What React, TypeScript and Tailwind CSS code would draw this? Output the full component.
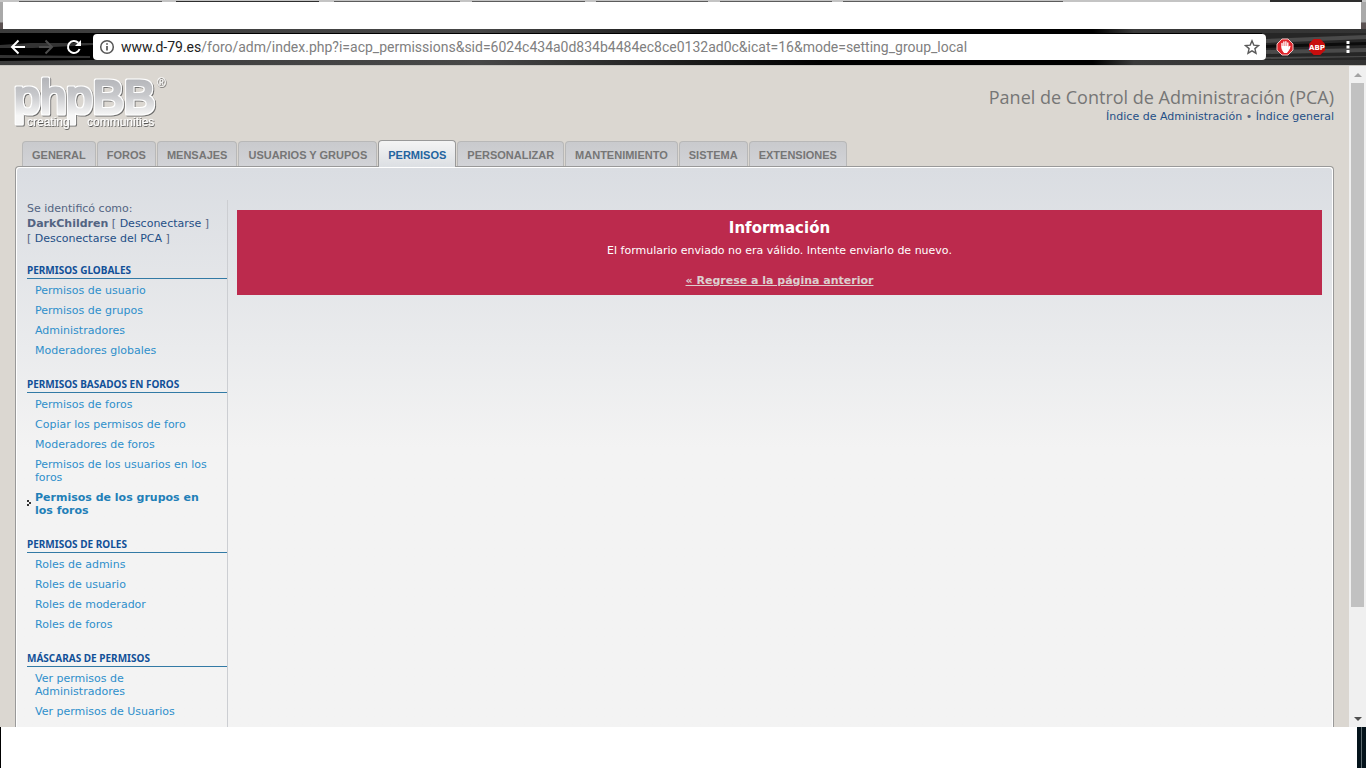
import { ReactNode } from "react";

const tabs = [
  "General",
  "Foros",
  "Mensajes",
  "Usuarios y grupos",
  "Permisos",
  "Personalizar",
  "Mantenimiento",
  "Sistema",
  "Extensiones",
];

const activeTab = "Permisos";
const activeItem = "Permisos de los grupos en los foros";

const menuBlocks = [
  {
    title: "Permisos globales",
    items: [
      "Permisos de usuario",
      "Permisos de grupos",
      "Administradores",
      "Moderadores globales",
    ],
  },
  {
    title: "Permisos basados en foros",
    items: [
      "Permisos de foros",
      "Copiar los permisos de foro",
      "Moderadores de foros",
      "Permisos de los usuarios en los foros",
      "Permisos de los grupos en los foros",
    ],
  },
  {
    title: "Permisos de roles",
    items: [
      "Roles de admins",
      "Roles de usuario",
      "Roles de moderador",
      "Roles de foros",
    ],
  },
  {
    title: "Máscaras de permisos",
    items: [
      "Ver permisos de Administradores",
      "Ver permisos de Usuarios",
      "Ver permisos de Moderadores globales",
    ],
  },
];

function ToolbarButton({ label, children }: { label: string; children: ReactNode }) {
  return (
    <button type="button" aria-label={label} className="flex h-7 w-7 items-center justify-center">
      {children}
    </button>
  );
}

function WindowTop() {
  return (
    <div className="flex h-[29px] shrink-0 flex-col bg-linear-to-b from-[#a9a9a9] from-75% to-[#5b5252] to-80%">
      <svg
        className="h-0.5 w-full"
        viewBox="0 0 1366 2"
        preserveAspectRatio="none"
        aria-hidden="true"
      >
        <path d="M0 0h1366v2H0z" fill="#c4c4c4" />
        <path
          d="M19 1h143v1H19zM176 1h143v1H176zM334 1h126v1H334zM472 1h113v1H472zM596 1h112v1H596zM720 1h112v1H720zM843 1h220v1H843z"
          fill="#5c5c5c"
        />
        <path d="M176 1h143v1H176zM1270 0h92v2h-92z" fill="#2e2e2e" />
      </svg>
      <div className="mr-[5px] ml-[3px] flex-1 bg-white" />
    </div>
  );
}

function BrowserBar() {
  return (
    <div className="relative flex h-9 shrink-0 items-center bg-black pl-1">
      <svg
        className="absolute inset-0 h-full w-full"
        viewBox="0 0 1366 36"
        preserveAspectRatio="none"
        aria-hidden="true"
      >
        <defs>
          <linearGradient id="bar-streak" x1="0" y1="0" x2="1" y2="0">
            <stop offset="0" stopColor="#3c3c3c" />
            <stop offset="0.350" stopColor="#474747" />
            <stop offset="0.600" stopColor="#000" />
            <stop offset="0.800" stopColor="#000" />
            <stop offset="0.830" stopColor="#3a3a3a" />
            <stop offset="1" stopColor="#333" />
          </linearGradient>
        </defs>
        <path d="M0 0h1366v4H0z" fill="url(#bar-streak)" />
        <path d="M0 32l180-2h1186v6H0z" fill="url(#bar-streak)" />
        <path d="M1262 4h104v27h-104z" fill="#262626" />
        <path d="M0 16l30-2h63v2l-60 3H0zM0 26l90 1v2H0z" fill="#333" />
        <path
          d="M1265 10l101-4v4l-101 4zM1265 21l101-2v4l-101 2zM1265 28l101-1v1l-101 2z"
          fill="#4a4a4a"
        />
        <path d="M1265 16l101-3v3l-101 3z" fill="#0c0c0c" />
      </svg>
      <div className="relative flex">
        <ToolbarButton label="Atrás">
          <svg width="16" height="16" viewBox="0 0 16 16" fill="none" stroke="#fff" strokeWidth="2">
            <path d="M15 8H2.500M8.500 1.500L2 8l6.500 6.500" />
          </svg>
        </ToolbarButton>
        <ToolbarButton label="Adelante">
          <svg width="16" height="16" viewBox="0 0 16 16" fill="none" stroke="#4d4d4d" strokeWidth="2">
            <path d="M1 8h12.500M7.500 1.500L14 8l-6.500 6.500" />
          </svg>
        </ToolbarButton>
        <ToolbarButton label="Recargar">
          <svg width="16" height="16" viewBox="0 0 16 16" fill="none" stroke="#fff" strokeWidth="2">
            <path d="M13.600 10A6 6 0 1 1 12.300 3.800" />
            <path d="M15 1v6H9z" fill="#fff" stroke="none" />
          </svg>
        </ToolbarButton>
      </div>
      <div className="relative ml-[5px] flex h-[26px] flex-1 items-center rounded-sm bg-white px-1.5">
        <svg width="16" height="16" viewBox="0 0 16 16" fill="none" stroke="#555" aria-hidden="true">
          <circle cx="8" cy="8" r="6.300" strokeWidth="1.500" />
          <path d="M8 7v4.500M8 4.200v1.600" strokeWidth="1.700" />
        </svg>
        <a
          href="#"
          className="ml-1.5 flex-1 whitespace-nowrap font-['Roboto',sans-serif] text-[14px] text-[#808080]"
        >
          <span className="text-[#222]">www.d-79.es</span>
          /foro/adm/index.php?i=acp_permissions&amp;sid=6024c434a0d834b4484ec8ce0132ad0c&amp;icat=16&amp;mode=setting_group_local
        </a>
        <button type="button" aria-label="Añadir a favoritos">
          <svg width="16" height="16" viewBox="0 0 16 16" fill="none" stroke="#5a5a5a" strokeWidth="1.400">
            <path d="M8 1.800l1.800 4.300 4.700.4-3.600 3.100 1.100 4.600L8 11.800l-4 2.400 1.100-4.600L1.500 6.500l4.700-.4z" />
          </svg>
        </button>
      </div>
      <div className="relative ml-2.5 flex items-center gap-3.5 pr-4">
        <button type="button" aria-label="AdBlock">
          <svg width="18" height="18" viewBox="0 0 18 18">
            <path d="M6 1h6l5 5v6l-5 5H6l-5-5V6z" fill="#e0252b" stroke="#f3c4c4" />
            <path
              d="M6 8.500v2.500l2 3.500h3l2.500-4-1.300.6V8.500z"
              fill="#fff"
              stroke="#fff"
              strokeLinejoin="round"
            />
            <path
              d="M6 9V5.500M7.900 9V4M9.900 9V3.700M11.800 9.500V5M13 10.500l.8-2"
              fill="none"
              stroke="#fff"
              strokeWidth="1.400"
              strokeLinecap="round"
            />
          </svg>
        </button>
        <button type="button" aria-label="Adblock Plus">
          <svg width="18" height="18" viewBox="0 0 18 18">
            <path d="M5.700 1h6.600L17 5.700v6.600L12.300 17H5.700L1 12.300V5.700z" fill="#c70d0d" />
            <text
              x="9"
              y="12"
              textAnchor="middle"
              fill="#fff"
              fontSize="7"
              fontWeight="bold"
              className="font-['DejaVu_Sans',sans-serif]"
            >
              ABP
            </text>
          </svg>
        </button>
        <button type="button" aria-label="Menú" className="ml-1.5">
          <svg width="4" height="14" viewBox="0 0 4 14" fill="#fff">
            <path d="M.5 1h3v3h-3zM.5 5.500h3v3h-3zM.5 10h3v3h-3z" />
          </svg>
        </button>
      </div>
    </div>
  );
}

function Logo() {
  return (
    <a href="#" aria-label="phpBB">
      <svg
        width="156"
        height="64"
        viewBox="0 -8 156 64"
        className="overflow-visible font-['Liberation_Sans',sans-serif]"
      >
        <defs>
          <linearGradient id="logo-fill" x1="0" y1="2" x2="0" y2="46" gradientUnits="userSpaceOnUse">
            <stop offset="0" stopColor="#b4b5b9" />
            <stop offset="0.400" stopColor="#c8c9cc" />
            <stop offset="0.850" stopColor="#f7f7f7" />
          </linearGradient>
          <filter id="logo-outline" x="-5%" y="-10%" width="110%" height="125%">
            <feMorphology in="SourceAlpha" operator="dilate" radius="1" result="wide" />
            <feFlood floodColor="#fff" />
            <feComposite in2="wide" operator="in" result="outline" />
            <feDropShadow in="outline" dx="1" dy="1" stdDeviation="0.600" floodColor="#666" floodOpacity="0.900" result="base" />
            <feMerge>
              <feMergeNode in="base" />
              <feMergeNode in="SourceGraphic" />
            </feMerge>
          </filter>
          <filter id="logo-shadow" x="-5%" y="-10%" width="110%" height="130%">
            <feDropShadow dx="0.700" dy="1" stdDeviation="0.500" floodColor="#444" floodOpacity="0.900" />
          </filter>
        </defs>
        <text
          x="-1"
          y="37"
          fontSize="47"
          fill="url(#logo-fill)"
          stroke="url(#logo-fill)"
          strokeWidth="3"
          strokeLinejoin="round"
          filter="url(#logo-outline)"
        >
          phpBB
        </text>
        <text x="142" y="11" fontSize="12" fill="#fff" filter="url(#logo-shadow)">
          ®
        </text>
        <text x="12" y="50" fontSize="12" fill="#fff" filter="url(#logo-shadow)">
          creating
        </text>
        <text x="72" y="50" fontSize="12" fill="#fff" filter="url(#logo-shadow)">
          communities
        </text>
      </svg>
    </a>
  );
}

function Tabs() {
  return (
    <nav className="relative z-10 -mb-px flex items-end gap-px pl-[7px] font-['Liberation_Sans',sans-serif] text-[11px] font-bold uppercase">
      {tabs.map((tab) =>
        tab === activeTab ? (
          <a
            key={tab}
            href="#"
            className="flex h-[27px] items-center rounded-t border border-b-0 border-[#999] bg-gradient-to-b from-[#f4f4f4] to-[#dcdfe3] px-[9px] pt-0.5 text-[#23649f]"
          >
            {tab}
          </a>
        ) : (
          <a
            key={tab}
            href="#"
            className="mb-px flex h-[25px] items-center rounded-t border border-b-0 border-[#b8b8b8] bg-gradient-to-b from-[#c9cacd] to-[#d2d3d7] px-[9px] pt-0.5 text-[#767676]"
          >
            {tab}
          </a>
        ),
      )}
    </nav>
  );
}

function Sidebar() {
  return (
    <aside className="w-[201px] shrink-0 border-r border-[#ccced2]">
      <p className="pt-px leading-[15px]">
        Se identificó como:
        <br />
        <strong>DarkChildren</strong> [{" "}
        <a href="#" className="text-[#1f4f86]">
          Desconectarse
        </a>{" "}
        ]
        <br />[{" "}
        <a href="#" className="text-[#1f4f86]">
          Desconectarse del PCA
        </a>{" "}
        ]
      </p>
      {menuBlocks.map((block) => (
        <div key={block.title} className="mt-[18px]">
          <h2 className="border-b border-[#327aa5] pb-0.5 font-['Noto_Sans',sans-serif] text-[10px] leading-[12px] font-bold text-[#115098] uppercase">
            {block.title}
          </h2>
          <ul className="pt-0.5">
            {block.items.map((item) => (
              <li key={item} className="relative mb-px py-[3px] pr-4 pl-2 leading-[13px]">
                {item === activeItem && (
                  <svg className="absolute top-3 left-0" width="4" height="6" viewBox="0 0 4 6" fill="#333">
                    <path d="M0 0h2v2H0zM2 2h2v2H2zM0 4h2v2H0z" />
                  </svg>
                )}
                <a
                  href="#"
                  className={item === activeItem ? "font-bold text-[#1f80b8]" : "text-[#2e8fcb]"}
                >
                  {item}
                </a>
              </li>
            ))}
          </ul>
        </div>
      ))}
    </aside>
  );
}

function Message() {
  return (
    <section className="bg-[#bc2a4d] px-2.5 pt-[9px] pb-[7px] text-center text-white">
      <h1 className="text-[15px] leading-[18px] font-bold">Información</h1>
      <p className="mt-1.5 leading-[15px]">
        El formulario enviado no era válido. Intente enviarlo de nuevo.
      </p>
      <p className="mt-[15px] leading-[15px]">
        <a href="#" className="font-bold text-[#dccfcf] underline">
          « Regrese a la página anterior
        </a>
      </p>
    </section>
  );
}

function Scrollbar() {
  return (
    <div className="flex w-[17px] shrink-0 flex-col items-center bg-[#f0f0f0]" aria-hidden="true">
      <svg width="17" height="17" viewBox="0 0 17 17" fill="#a3a3a3">
        <path d="M5 11h8L9 7z" />
      </svg>
      <div className="flex w-full flex-1 flex-col pr-0.5 pl-0.5">
        <div className="basis-[83.5%] bg-[#c1c1c1]" />
      </div>
      <svg width="17" height="17" viewBox="0 0 17 17" fill="#505050">
        <path d="M5 7h8l-4 4z" />
      </svg>
    </div>
  );
}

export default function App() {
  return (
    <div className="flex h-screen flex-col overflow-hidden bg-white">
      <WindowTop />
      <BrowserBar />
      <div className="flex min-h-0 flex-1 border-t border-[#c6c4bf]">
        <main className="flex min-w-0 flex-1 flex-col overflow-hidden bg-[#dbd7d1] px-[15px] font-['DejaVu_Sans',sans-serif] text-[11px] text-[#536482]">
          <header className="flex h-[74px] shrink-0 items-start justify-between pt-0.5">
            <Logo />
            <div className="pt-[17px] text-right">
              <p className="font-['Open_Sans',sans-serif] text-[18px] leading-6 text-[#767676]">
                Panel de Control de Administración (PCA)
              </p>
              <p className="leading-[15px]">
                <a href="#" className="text-[#1f4f86]">
                  Índice de Administración
                </a>{" "}
                •{" "}
                <a href="#" className="text-[#1f4f86]">
                  Índice general
                </a>
              </p>
            </div>
          </header>
          <Tabs />
          <div className="min-h-0 flex-1 rounded-t border border-b-0 border-[#999]">
            <div className="flex h-full rounded-t border border-b-0 border-white bg-[#f3f3f3] bg-linear-to-b from-[#dadde2] to-[#f3f3f3] to-[280px] px-2.5 pt-8">
              <Sidebar />
              <div className="flex-1 pt-2.5 pl-[9px]">
                <Message />
              </div>
            </div>
          </div>
        </main>
        <Scrollbar />
      </div>
      <footer className="flex h-[41px] shrink-0 justify-end border-l border-black">
        <div className="flex w-[9px] justify-center bg-[#04131b]">
          <div className="w-px bg-[#5d6a70]" />
        </div>
      </footer>
    </div>
  );
}
